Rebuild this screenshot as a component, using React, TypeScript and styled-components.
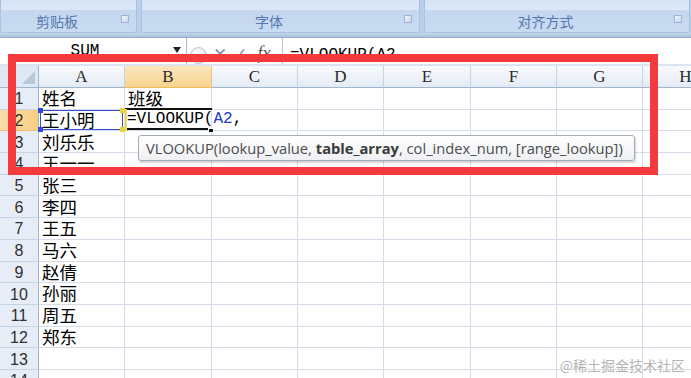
import React from 'react';
import styled, { createGlobalStyle } from 'styled-components';

const GlobalStyle = createGlobalStyle`
  html, body {
    margin: 0;
    padding: 0;
    background: #ffffff;
    overflow: hidden;
  }
  body {
    font-family: "Noto Sans CJK SC", sans-serif;
  }
  * {
    box-sizing: border-box;
  }
`;

const columns = ['A', 'B', 'C', 'D', 'E', 'F', 'G', 'H'];
const names = ['姓名', '王小明', '刘乐乐', '王一一', '张三', '李四', '王五', '马六', '赵倩', '孙丽', '周五', '郑东', '', ''];

const App: React.FC = () => {
  return (
    <Page>
      <GlobalStyle />
      <Ribbon>
        <Group $width={137}>
          <GroupBody />
          <GroupFoot>
            <GroupLabel>剪贴板</GroupLabel>
            <Launcher />
          </GroupFoot>
        </Group>
        <Group $width={279}>
          <GroupBody />
          <GroupFoot>
            <GroupLabel>字体</GroupLabel>
            <Launcher />
          </GroupFoot>
        </Group>
        <Group $width={266}>
          <GroupBody />
          <GroupFoot>
            <GroupLabel>对齐方式</GroupLabel>
            <Launcher />
          </GroupFoot>
        </Group>
      </Ribbon>
      <RibbonShelf />

      <FormulaBar>
        <NameBox>
          <NameText>SUM</NameText>
          <DropArrow />
        </NameBox>
        <FxArea>
          <RoundButton />
          <FxGlyph $color="#7f90a6">✕</FxGlyph>
          <FxGlyph $color="#7f90a6">✓</FxGlyph>
          <FxItalic>fx</FxItalic>
        </FxArea>
        <FormulaInput>=VLOOKUP(A2,</FormulaInput>
      </FormulaBar>
      <GridGap />

      <Sheet>
        <Corner>
          <CornerTriangle />
        </Corner>
        {columns.map((c) => (
          <ColHeader key={c} $active={c === 'B'}>
            {c}
          </ColHeader>
        ))}
        {names.map((name, i) => {
          const row = i + 1;
          return (
            <React.Fragment key={row}>
              <RowHeader $active={row === 2}>{row}</RowHeader>
              <Cell $ref={row === 2}>
                {name}
                {row === 2 && (
                  <>
                    <RefHandle $top $left />
                    <RefHandle $top />
                    <RefHandle $left />
                    <RefHandle />
                  </>
                )}
              </Cell>
              {row === 1 ? (
                <Cell>班级</Cell>
              ) : row === 2 ? (
                <ActiveCell>
                  <Formula>
                    =VLOOKUP(<RefText>A2</RefText>,
                  </Formula>
                  <FillHandle />
                </ActiveCell>
              ) : (
                <Cell />
              )}
              {columns.slice(2).map((c) => (
                <Cell key={c} />
              ))}
            </React.Fragment>
          );
        })}
      </Sheet>

      <Tooltip>
        VLOOKUP(lookup_value, <b>table_array</b>, col_index_num, [range_lookup])
      </Tooltip>
      <RedFrame />
      <Watermark>@稀土掘金技术社区</Watermark>
    </Page>
  );
};

// Styled Components
const Page = styled.div`
  position: relative;
  width: 691px;
  height: 378px;
  overflow: hidden;
  background: #ffffff;
`;

const Ribbon = styled.div`
  display: flex;
  gap: 4px;
  height: 33px;
  background: #b9cfea;
`;

const Group = styled.div<{ $width: number }>`
  display: flex;
  flex-direction: column;
  width: ${({ $width }) => $width}px;
  flex-shrink: 0;
  border: 1px solid #a9c2e0;
  border-top: none;
  border-radius: 0 0 4px 4px;
  overflow: hidden;
  box-shadow: inset 0 -1px 0 #e6effa;
`;

const GroupBody = styled.div`
  height: 10px;
  background: linear-gradient(#d4e3f5, #dce8f7);
`;

const GroupFoot = styled.div`
  flex: 1;
  display: flex;
  align-items: center;
  background: linear-gradient(#c3d7ef, #c9dbf1);
`;

const GroupLabel = styled.span`
  flex: 1;
  text-align: center;
  font: 14px/1 "Noto Sans CJK SC", sans-serif;
  color: #5577ad;
  padding-right: 20px;
  margin-right: -12px;
`;

const Launcher = styled.span`
  width: 8px;
  height: 8px;
  margin-right: 7px;
  margin-bottom: 4px;
  border: 1px solid #9fb4cf;
  background: linear-gradient(135deg, #f2f6fb, #c9d7ea);
`;

const RibbonShelf = styled.div`
  height: 5px;
  background: linear-gradient(#c6d8ee, #aac0dc);
  border-bottom: 1px solid #98b0cf;
`;

const FormulaBar = styled.div`
  display: flex;
  align-items: center;
  height: 26px;
  background: #ffffff;
`;

const NameBox = styled.div`
  position: relative;
  display: flex;
  align-items: center;
  justify-content: center;
  width: 187px;
  height: 100%;
  border-right: 1px solid #a5b8d1;
`;

const NameText = styled.span`
  font: 16px/1 "Liberation Mono", monospace;
  color: #000;
  margin-left: -16px;
`;

const DropArrow = styled.span`
  position: absolute;
  right: 5px;
  top: 9px;
  width: 0;
  height: 0;
  border-left: 4px solid transparent;
  border-right: 4px solid transparent;
  border-top: 6px solid #222;
`;

const FxArea = styled.div`
  display: flex;
  align-items: center;
  gap: 6px;
  width: 96px;
  height: 100%;
  padding-left: 3px;
  border-right: 1px solid #b5c5d9;
`;

const RoundButton = styled.span`
  width: 17px;
  height: 17px;
  border-radius: 50%;
  border: 1px solid #b8c4d2;
  background: radial-gradient(circle at 40% 35%, #ffffff, #cfd7e1);
  margin-top: 8px;
`;

const FxGlyph = styled.span<{ $color: string }>`
  font: bold 17px/1 "DejaVu Sans", sans-serif;
  color: ${({ $color }) => $color};
  margin-top: 6px;
`;

const FxItalic = styled.span`
  font: italic 18px/1 "Liberation Serif", serif;
  color: #555;
  margin-top: 4px;
  margin-left: 4px;
`;

const FormulaInput = styled.div`
  padding-left: 7px;
  font: 16px/1 "Liberation Mono", monospace;
  color: #000;
  margin-top: 8px;
`;

const GridGap = styled.div`
  height: 2px;
  background: #dbe5f2;
`;

const Sheet = styled.div`
  display: grid;
  grid-template-columns: 39px 86px 87px 86px 86px 87px 86px 86px 86px;
  grid-template-rows: 22px repeat(14, 21.7px);
`;

const Corner = styled.div`
  position: relative;
  background: #dfe8f4;
  border-right: 1px solid #9eb6ce;
  border-bottom: 1px solid #9eb6ce;
`;

const CornerTriangle = styled.span`
  position: absolute;
  right: 3px;
  bottom: 3px;
  width: 0;
  height: 0;
  border-left: 13px solid transparent;
  border-bottom: 13px solid #b9c9dc;
`;

const ColHeader = styled.div<{ $active?: boolean }>`
  display: flex;
  align-items: center;
  justify-content: center;
  background: ${({ $active }) =>
    $active ? 'linear-gradient(#fce6be, #f8d390)' : 'linear-gradient(#f8fafd, #e4ebf5)'};
  border-right: 1px solid ${({ $active }) => ($active ? '#f2c46e' : '#c5d2e2')};
  border-bottom: 1px solid ${({ $active }) => ($active ? '#f0b850' : '#9eb6ce')};
  font: 17px/1 "Liberation Serif", serif;
  color: #2a2a2a;
`;

const RowHeader = styled.div<{ $active?: boolean }>`
  display: flex;
  align-items: center;
  justify-content: center;
  padding-top: 2px;
  background: ${({ $active }) => ($active ? 'linear-gradient(90deg, #fbdca8, #f7cf86)' : '#e6edf7')};
  border-right: 1px solid #9eb6ce;
  border-bottom: 1px solid ${({ $active }) => ($active ? '#f0c070' : '#c6d3e3')};
  font: 16px/1 "Liberation Sans", sans-serif;
  color: #303030;
`;

const Cell = styled.div<{ $ref?: boolean }>`
  position: relative;
  display: flex;
  align-items: flex-end;
  padding: 0 0 2px 3px;
  border-right: 1px solid #d6dde8;
  border-bottom: 1px solid #d6dde8;
  font: 17.5px/1 "Noto Sans CJK SC", sans-serif;
  color: #000;
  white-space: nowrap;
  ${({ $ref }) =>
    $ref &&
    `
    &::after {
      content: '';
      position: absolute;
      inset: 0 1px 0 1px;
      border: 1.5px solid #3650d0;
    }
  `}
`;

const RefHandle = styled.span<{ $top?: boolean; $left?: boolean }>`
  position: absolute;
  z-index: 2;
  width: 5px;
  height: 5px;
  background: ${({ $left }) => ($left ? '#2f4bd6' : '#e9d23a')};
  ${({ $top }) => ($top ? 'top: -2px;' : 'bottom: -2px;')}
  ${({ $left }) => ($left ? 'left: -1px;' : 'right: -1px;')}
`;

const ActiveCell = styled.div`
  position: relative;
  z-index: 1;
  display: flex;
  align-items: flex-end;
  padding: 0 0 3px 2px;
  border-right: 1px solid #d6dde8;
  border-bottom: 1px solid #d6dde8;
  white-space: nowrap;
  box-shadow: inset 0 -2px 0 #111;

  &::before {
    content: '';
    position: absolute;
    left: 0;
    right: -1px;
    top: -2px;
    height: 2px;
    background: #111;
  }

  &::after {
    content: '';
    position: absolute;
    left: 0;
    top: -1px;
    bottom: -1px;
    width: 2px;
    background: #efd94a;
  }
`;

const Formula = styled.span`
  font: 16px/1 "Liberation Mono", monospace;
  color: #000;
`;

const RefText = styled.span`
  color: #2438c8;
`;

const FillHandle = styled.span`
  position: absolute;
  right: -3px;
  bottom: -3px;
  width: 6px;
  height: 5px;
  background: #111;
  border: 1px solid #fff;
`;

const Tooltip = styled.div`
  position: absolute;
  left: 138px;
  top: 135px;
  width: 497px;
  height: 26px;
  display: flex;
  align-items: center;
  padding-left: 7px;
  border: 1px solid #a3acb8;
  border-radius: 3px;
  background: linear-gradient(#ffffff, #eef0f3);
  box-shadow: 1px 2px 2px rgba(0, 0, 0, 0.18);
  font: 14.7px/1 "Open Sans", sans-serif;
  color: #4d4d4d;
  white-space: pre;

  b {
    font-weight: 700;
    color: #3a3a3a;
  }
`;

const RedFrame = styled.div`
  position: absolute;
  left: 8px;
  top: 54px;
  width: 650px;
  height: 121px;
  border: 8px solid #f43a3c;
  pointer-events: none;
`;

const Watermark = styled.div`
  position: absolute;
  right: 6px;
  bottom: 6px;
  font: 14px/1 "Noto Sans CJK SC", sans-serif;
  color: #b4b4b4;
  text-shadow: 0 0 1px #ffffff;
`;

export default App;
